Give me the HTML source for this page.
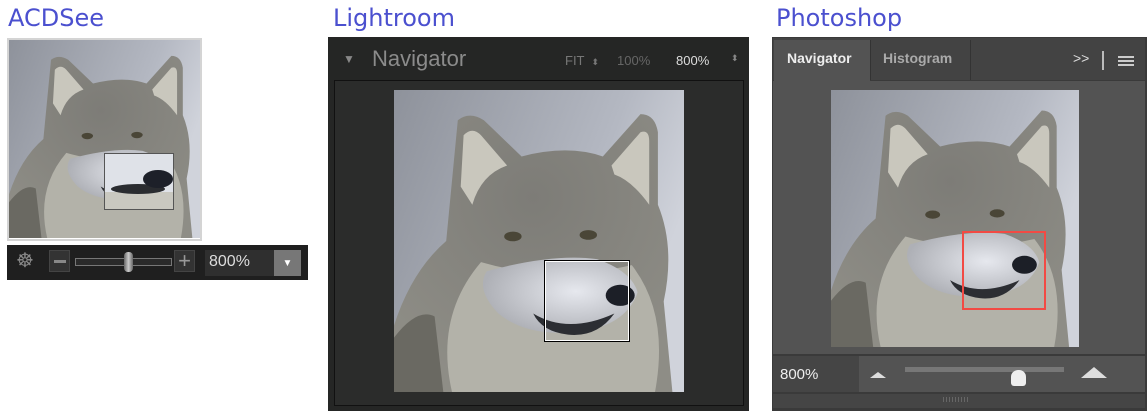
<!DOCTYPE html>
<html><head><meta charset="utf-8"><style>
*{margin:0;padding:0;box-sizing:border-box}
body{width:1147px;height:411px;background:#fff;position:relative;overflow:hidden;font-family:"Liberation Sans",sans-serif}
.a{position:absolute}
.t{font-size:24px;color:#4b50cf;font-family:"DejaVu Sans","Liberation Sans",sans-serif;top:4px}
svg.w{position:absolute;display:block}
</style></head><body>
<svg width="0" height="0" style="position:absolute">
<defs>
<linearGradient id="bg" x1="0" y1="0" x2="1" y2="0.4"><stop offset="0" stop-color="#8e929b"/><stop offset="0.7" stop-color="#b4b8c2"/><stop offset="1" stop-color="#d0d3db"/></linearGradient>
<radialGradient id="head" cx="0.5" cy="0.3" r="0.7"><stop offset="0" stop-color="#7d7c77"/><stop offset="1" stop-color="#8e8d86"/></radialGradient>
<radialGradient id="muz" cx="0.6" cy="0.45" r="0.6"><stop offset="0" stop-color="#e6e8ee"/><stop offset="1" stop-color="#aeb0b6"/></radialGradient>
<symbol id="wolf" viewBox="0 0 100 100" preserveAspectRatio="none">
<rect width="100" height="100" fill="url(#bg)"/>
<path d="M0 78 Q6 60 18 50 L20 30 L22 10 Q26 7 31 10 L44 22 Q60 18 72 22 L85 8 Q90 8 91 14 L91 38 Q97 52 93 70 L96 100 L0 100Z" fill="url(#head)"/>
<path d="M23 32 L24 15 Q27 12 30 15 L39 25 Q30 28 27 38Z" fill="#c9c7bd"/>
<path d="M75 25 L85 14 Q88 13 88 17 L88 38 Q82 30 76 28Z" fill="#c9c7bd"/>
<path d="M20 100 Q14 75 30 57 Q55 64 82 58 Q95 74 90 100Z" fill="#b3b2a9"/>
<path d="M32 60 Q55 54 70 56 Q82 60 84 67 Q80 78 64 80 Q46 82 36 74 Q28 66 32 60Z" fill="url(#muz)"/>
<path d="M48 74 Q60 81 76 74 Q70 82 60 81 Q51 80 48 74Z" fill="#2c2e33"/>
<ellipse cx="78" cy="68" rx="5" ry="3.5" fill="#1c1f27"/>
<ellipse cx="41" cy="48.5" rx="3" ry="1.6" fill="#4a4637"/>
<ellipse cx="67" cy="48" rx="3" ry="1.6" fill="#4a4637"/>
<path d="M0 100 L0 82 Q8 72 14 75 L17 100Z" fill="#6a6962"/>
</symbol>
</defs></svg>

<!-- ACDSee -->
<div class="a t" style="left:8px">ACDSee</div>
<div class="a" style="left:7px;top:38px;width:195px;height:203px;border:2px solid #d4d4d4;background:#fff"></div>
<svg class="w" style="left:9px;top:40px" width="191" height="198"><use href="#wolf" width="191" height="198"/></svg>
<div class="a" style="left:104px;top:153px;width:70px;height:57px;border:1px solid #555;overflow:hidden;background:#dfe2e8">
<div class="a" style="left:0;top:38px;width:70px;height:18px;background:#c9c8c0"></div>
<div class="a" style="left:6px;top:30px;width:54px;height:10px;border-radius:50%;background:#2a2c30"></div>
<div class="a" style="left:38px;top:16px;width:30px;height:18px;border-radius:50%;background:#1d2029"></div>
</div>
<div class="a" style="left:7px;top:245px;width:301px;height:35px;background:#1f1f1f"></div>
<div class="a" style="left:16px;top:248px;color:#888;font-size:20px">☸</div>
<div class="a" style="left:49px;top:250px;width:21px;height:22px;background:#333;border:1px solid #444"><div class="a" style="left:4px;top:9px;width:12px;height:3px;background:#888"></div></div>
<div class="a" style="left:75px;top:258px;width:97px;height:8px;border:1px solid #777;background:#2a2a2a"></div>
<div class="a" style="left:124px;top:252px;width:9px;height:20px;border-radius:4px;background:linear-gradient(90deg,#666,#ccc,#666)"></div>
<div class="a" style="left:174px;top:250px;width:21px;height:22px;background:#333;border:1px solid #444;color:#999;font-size:22px;line-height:20px;text-align:center">+</div>
<div class="a" style="left:205px;top:250px;width:96px;height:26px;background:#2f2f2f"></div>
<div class="a" style="left:209px;top:253px;color:#ddd;font-size:16px">800%</div>
<div class="a" style="left:274px;top:250px;width:27px;height:26px;background:#777;color:#fff;font-size:10px;text-align:center;line-height:27px">▼</div>

<!-- Lightroom -->
<div class="a t" style="left:333px">Lightroom</div>
<div class="a" style="left:328px;top:37px;width:421px;height:374px;background:#252625"></div>
<div class="a" style="left:343px;top:52px;color:#888;font-size:12px">▼</div>
<div class="a" style="left:372px;top:46px;color:#8b8b8b;font-size:22px">Navigator</div>
<div class="a" style="left:565px;top:53px;color:#777;font-size:13px">FIT &nbsp;<span style="font-size:9px">⬍</span></div>
<div class="a" style="left:617px;top:53px;color:#666;font-size:13px">100%</div>
<div class="a" style="left:676px;top:53px;color:#ddd;font-size:13px">800%</div>
<div class="a" style="left:731px;top:53px;color:#888;font-size:9px">⬍</div>
<div class="a" style="left:334px;top:80px;width:410px;height:326px;border:1px solid #111;background:#2b2c2b"></div>
<svg class="w" style="left:394px;top:90px" width="290" height="302"><use href="#wolf" width="290" height="302"/></svg>
<div class="a" style="left:545px;top:261px;width:84px;height:80px;border:1.5px solid #fff;outline:1px solid #000"></div>

<!-- Photoshop -->
<div class="a t" style="left:776px">Photoshop</div>
<div class="a" style="left:772px;top:37px;width:375px;height:374px;background:#3a3a3a"></div>
<div class="a" style="left:773px;top:38px;width:372px;height:42px;background:#434343"></div>
<div class="a" style="left:774px;top:40px;width:96px;height:41px;background:#535353"></div>
<div class="a" style="left:870px;top:40px;width:1px;height:40px;background:#333"></div>
<div class="a" style="left:970px;top:40px;width:1px;height:40px;background:#333"></div>
<div class="a" style="left:787px;top:50px;color:#eee;font-size:14px;font-weight:bold">Navigator</div>
<div class="a" style="left:883px;top:50px;color:#aaa;font-size:14px;font-weight:bold">Histogram</div>
<div class="a" style="left:1073px;top:50px;color:#ddd;font-size:14px">&gt;&gt;</div>
<div class="a" style="left:1102px;top:51px;width:2px;height:19px;background:#bbb"></div>
<div class="a" style="left:1118px;top:56px;width:16px;height:10px;border-top:2px solid #ccc;border-bottom:2px solid #ccc"><div class="a" style="left:0;top:2px;width:16px;height:2px;background:#ccc"></div></div>
<div class="a" style="left:773px;top:81px;width:372px;height:273px;background:#535353"></div>
<svg class="w" style="left:831px;top:90px" width="248" height="257"><use href="#wolf" width="248" height="257"/></svg>
<div class="a" style="left:962px;top:231px;width:84px;height:79px;border:2px solid #f24a44"></div>
<div class="a" style="left:773px;top:356px;width:372px;height:36px;background:#535353"></div>
<div class="a" style="left:773px;top:356px;width:86px;height:36px;background:#454545"></div>
<div class="a" style="left:780px;top:366px;color:#eee;font-size:15px">800%</div>
<div class="a" style="left:870px;top:372px;width:0;height:0;border-left:8px solid transparent;border-right:8px solid transparent;border-bottom:6px solid #ddd"></div>
<div class="a" style="left:905px;top:367px;width:159px;height:5px;background:#777"></div>
<div class="a" style="left:1011px;top:370px;width:15px;height:16px;background:#eee;border-radius:7px 7px 3px 3px"></div>
<div class="a" style="left:1081px;top:367px;width:0;height:0;border-left:13px solid transparent;border-right:13px solid transparent;border-bottom:11px solid #ddd"></div>
<div class="a" style="left:773px;top:394px;width:372px;height:14px;background:#454545"></div>
<div class="a" style="left:943px;top:397px;width:27px;height:5px;background:repeating-linear-gradient(90deg,#666 0 1px,transparent 1px 3px)"></div>
</body></html>
